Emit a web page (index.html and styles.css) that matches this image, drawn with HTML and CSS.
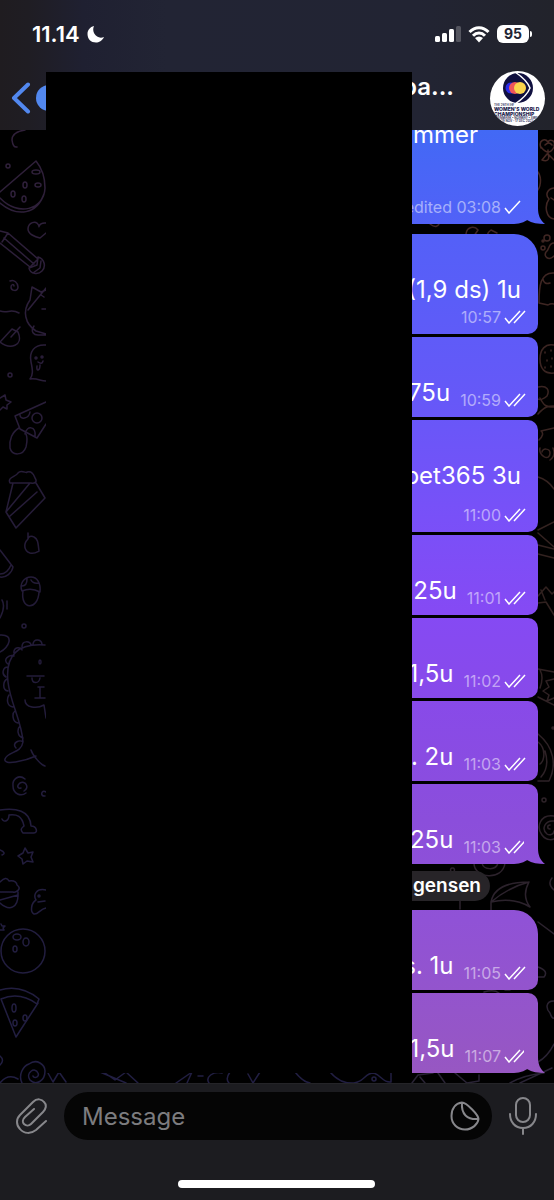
FILE: index.html
```html
<!DOCTYPE html>
<html lang="en">
<head>
    <meta charset="UTF-8">
    <meta name="viewport" content="width=device-width, initial-scale=1.0">
    <title>Chat</title>
    <link rel="stylesheet" href="styles.css">
</head>
<body>
    <!-- shared icons -->
    <svg class="symbols" aria-hidden="true">
        <symbol id="check" viewBox="0 0 22 14">
            <path d="M1 8l4 5L16 1"/>
        </symbol>
        <symbol id="double-check" viewBox="0 0 22 14">
            <path d="M1 8l4 5L16 1M10 13L21 1"/>
        </symbol>
    </svg>

    <header class="header">
        <div class="status-bar">
            <div class="status-left">
                <span class="clock">11.14</span>
                <svg class="moon" viewBox="0 0 18 18"><path d="M7 1C4 7 10 15 17 12C15 16 12 17.500 9 17.500C4 17.500 .5 14 .5 9C.5 5 3 2 7 1z"/></svg>
            </div>
            <div class="status-right">
                <svg class="signal" viewBox="0 0 26 16">
                    <rect x="0" y="10" width="5" height="6" rx="1.500"/>
                    <rect x="7" y="7" width="5" height="9" rx="1.500"/>
                    <rect x="14" y="3" width="5" height="13" rx="1.500"/>
                    <rect class="signal-off" x="21" y="0" width="5" height="16" rx="1.500"/>
                </svg>
                <svg class="wifi" viewBox="0 0 22 17">
                    <path class="wave" d="M1.500 6C7 .3 15 .3 20.500 6M5 9.700C8.500 6 13.500 6 17 9.700"/>
                    <path d="M7 12C9.500 10 12.500 10 15 12L11 16.500z"/>
                </svg>
                <span class="battery">95</span>
            </div>
        </div>
        <nav class="nav-bar">
            <button class="back" type="button" aria-label="Back">
                <svg class="chevron" viewBox="0 0 20 32"><path d="M17 2.500L3 16l14 13.500"/></svg>
                <span class="badge"></span>
            </button>
            <h1 class="title">pa...</h1>
            <a class="avatar" href="#" aria-label="Group info">
                <svg viewBox="0 0 55 55">
                    <circle cx="28" cy="17" r="15" fill="#10103f"/>
                    <circle cx="21" cy="17" r="5.500" fill="#2b2be8"/>
                    <circle cx="25" cy="17" r="6" fill="#f0565a"/>
                    <circle cx="30" cy="17" r="6" fill="#fbd44c"/>
                    <path d="M25 1q12 8 15 16-3 8-15 16" fill="none" stroke="#fff" stroke-width="1.500"/>
                    <text class="logo-small" x="4" y="35">THE 26TH IHF</text>
                    <text class="logo-text" x="4" y="40">WOMEN'S WORLD</text>
                    <text class="logo-text" x="4" y="45">CHAMPIONSHIP</text>
                    <text class="logo-small" x="6" y="48">DENMARK • NORWAY • SWEDEN</text>
                    <text class="logo-small" x="11" y="51">29 NOV - 17 DEC 2023</text>
                </svg>
            </a>
        </nav>
    </header>

    <main class="chat">
        <svg class="wallpaper" viewBox="0 130 554 953" preserveAspectRatio="xMidYMin slice" aria-hidden="true">
            <defs>
                <linearGradient id="left-tint" gradientUnits="userSpaceOnUse" x1="0" y1="130" x2="0" y2="1083">
                    <stop offset="0" stop-color="#30203a"/>
                    <stop offset="0.500" stop-color="#231b38"/>
                    <stop offset="1" stop-color="#211e42"/>
                </linearGradient>
                <linearGradient id="right-tint" gradientUnits="userSpaceOnUse" x1="0" y1="130" x2="0" y2="1083">
                    <stop offset="0" stop-color="#452824"/>
                    <stop offset="0.500" stop-color="#30211f"/>
                    <stop offset="1" stop-color="#292335"/>
                </linearGradient>
            </defs>
            <g stroke="url(#left-tint)">
                <path d="M25 130q-13 2-13 10 1 8 5 7"/>
                <circle cx="8" cy="166" r="2"/>
                <!-- watermelon -->
                <path d="M0 192L36 161q9 11 9 27c-1 22-27 29-45 10M0 203c18 15 37 11 44-9"/>
                <ellipse cx="36" cy="172" rx="4" ry="2"/>
                <ellipse cx="25" cy="185" rx="2" ry="3"/>
                <ellipse cx="38" cy="185" rx="3" ry="2"/>
                <ellipse cx="13" cy="194" rx="2" ry="3"/>
                <ellipse cx="24" cy="199" rx="2" ry="3"/>
                <path d="M46 223c-8-1-7 6-7 3-3-7-11-3-11 3 0 5 7 8 12 9l6-5"/>
                <!-- pencil -->
                <path d="M0 231l8 2 30 26-8 8L0 243M8 233l-6 9M4 238l30 26M38 257c7 2 8 10 4 14-4 4-12 3-13-3M38 257l-1 8-8 3M41 261l-1 7-7 5"/>
                <path d="M10 281c4-2 8 2 8 6 0 5-7 4-7 0 0-3 3-3 3-1M0 311c8 3 10-3 19 2"/>
                <!-- kitten -->
                <path d="M46 290l-5 2-9-5-2 13c-8 11-5 24 6 31l10 3M46 288L28 310M34 326c-4 6 0 9 4 9h8M41 295l3 2M42 309h4"/>
                <path d="M0 342l12-13 6 3c6 14-8 18-18 10M20 327l-9 10"/>
                <!-- ghost -->
                <path d="M46 345c-12-1-17 7-15 17 2 9 2 13-1 17 8-1 10 2 16 2M37 366c-1 6 3 5 3-1"/>
                <circle cx="36" cy="358" r="1"/><circle cx="42" cy="357" r="1"/>
                <path d="M38 362q4 3 5-1"/>
                <circle cx="10" cy="375" r="2"/>
                <path d="M0 398l5-3 1 5 5 2-4 3v4l-4-2-3 3"/>
                <!-- cheese -->
                <path d="M46 402L15 416l5 13 17 9 9-14M20 415c0 5 9 4 10-3M25 434c2-9 11-8 10 2"/>
                <circle cx="37" cy="418" r="5"/>
                <path d="M19 428c-7 4-10 12-9 20 2 8 13 8 16-1 1-5 2-8 0-13"/>
                <!-- cake -->
                <path d="M10 483c-3-6 6-6 8-10 3-4 9 1 9-1 6-2 7 4 8 6 3 4-1 6-4 5zM13 483L6 512l10 16 29-30-9-15M6 512l24-29M10 516l27-24"/>
                <path d="M28 533v6c-5 5-4 12 2 14 5 1 7-1 9-2-1-8-1-12-5-14-3-2-6 0-6 2"/>
                <path d="M0 550l13 17c-1 6-7 11-13 10M0 574c5 0 9-4 11-9"/>
                <!-- acorn -->
                <path d="M22 591c-3-7 2-14 9-14 6 0 10 6 9 15q-9-5-18-1M23 591c-3 19 15 20 16 1M22 586q5 0 5-7M31 580q2 4 8 3"/>
                <path d="M2 600c3 5 2 10-2 18M7 601v8"/>
                <circle cx="24" cy="626" r="2"/>
                <path d="M0 635c15-1 9 13 0 17"/>
                <!-- dinosaur -->
                <path d="M45 645c-27-2-40 10-37 37 2 20 14 40 15 60-2 12-15 9-18 17-2 7 20 2 31-3M31 750c2 6 10 15 14 16M33 644c1-6 9-5 9 1M22 647c0-7 8-6 9-2M14 653c-1-7 8-6 8-3M8 664c-6-4 1-10 6-8M6 677c-5-3-3-10 2-10M8 691c-6-1-5-10-1-12M13 707c-7-1-6-9-4-12M18 723c-6-1-6-10-3-12M23 738c-6-2-6-9-3-12M16 748c-5-5 4-9 7-6M27 676h17M32 678c0 6 7 6 8 0M38 687h6M40 687v11M35 698h10M25 700c0 8 12 9 19 5l2 13"/>
                <ellipse cx="40" cy="662" rx="1" ry="2"/>
                <path d="M25 779c-6-5-13 0-12 7 0 8 8 11 13 7M24 791c6-4 1-11-4-8-4 3-2 6 1 5M46 792c-5-3-6 5-1 4"/>
                <!-- rainbow -->
                <path d="M0 810c16-2 30 0 31 16 6 0 7 7 3 7H23c-4-4 0-6 1-7-2-10-7-12-15-11 0 6-5 8-7 4"/>
                <path d="M25 848l3 5 5-1-2 5 2 5-6-1-4 3-1-5-4-3 5-3zM0 850q7 3 2 5"/>
                <!-- cupcake -->
                <path d="M0 882c4-4 7-5 9-1 6-1 8 2 8 4 6 4-2 8-4 7H0M0 903c10 9 18 4 18-8L0 900M18 892v5"/>
                <path d="M46 890c-10-2-13 5-10 10-5 3-6 12-2 14 4 1 6-5 12-6M38 902l7-1"/>
                <circle cx="39" cy="896" r="1"/>
                <!-- bowling ball -->
                <circle cx="23" cy="951" r="22"/>
                <ellipse cx="17" cy="937" rx="4" ry="3"/>
                <ellipse cx="26" cy="942" rx="3" ry="4"/>
                <ellipse cx="15" cy="949" rx="2" ry="3"/>
                <path d="M1 924l1 2h3l-2 2 1 2H0"/>
                <!-- pizza -->
                <path d="M0 990c14-4 28 0 39 9l-2 5c-11-8-24-10-36-5M1 999l15 38 22-34"/>
                <ellipse cx="14" cy="1008" rx="2" ry="4"/>
                <ellipse cx="25" cy="1018" rx="2" ry="3"/>
                <ellipse cx="15" cy="1023" rx="2" ry="3"/>
                <!-- bottom row -->
                <path d="M0 1056q5 4 0 9M22 1083c-4-8 1-17 7-19 8-6 16 1 16 7 0 10-9 15-15 9-5-7 5-14 8-7 2 4-4 6-5 3M0 1083q8-10 18-4M48 1073l5 9 6-10 7 10M100 1072l26 11M105 1073l10 7 11-8 12 11M176 1083l16-11-5 11M198 1076h5M209 1083c-4-6 4-12 13-10M230 1072q-5 7-1 11M248 1074l5 9 7-11"/>
                <path d="M295 1072q8 10 15 11M330 1072q10 12 24 11M354 1083c12-2 10-10 20-10 8 3 9 10 17 9v-9"/>
                <circle cx="374" cy="1079" r="2"/>
            </g>
            <g stroke="url(#right-tint)">
                <!-- rose -->
                <path d="M541 148c-3-8 4-10 7-6 2-4 8-1 6 4M541 147q8 10 13 0M545 145q4-4 7 0M547 154l-5 6c6 2 8-1 6-6zM548 154l6 6M548 150v4"/>
                <path d="M538 172c4 6 3 16-2 20"/>
                <path d="M554 188c-7 1-9 7-5 11-5 7-3 19 5 20M551 198l3 2"/>
                <path d="M466 234c1-8 9-8 12-4l-6 9M489 240q-4-6 2-10l6 3M430 224q8 6 10-3"/>
                <!-- paw -->
                <circle cx="543" cy="248" r="2"/><circle cx="547" cy="238" r="3"/><circle cx="543" cy="241" r="1"/>
                <path d="M554 243c-6 0-4 6-8 9-3 5 3 9 8 4"/>
                <path d="M554 273c-14-1-15 14-15 30l9 2q3-2 6-1M543 279q1 6 7 4"/>
                <!-- strawberry -->
                <path d="M554 345c-9-2-14 5-14 14 0 10 5 15 14 14"/>
                <path d="M545 352v1M551 350v1M547 360v1M552 358v1M545 367v1M551 366v1"/>
                <path d="M538 387c9-2 12 3 9 9q-6 5-9 3M540 398c4 8 6 9 14 9M538 414c7-8 11-8 16-8M539 440q6-6 2-9l13-3M540 448c-2 8 10 14 10 5 0-5-8-5-8-1M553 448q3 8-3 12M538 477q10 3 16 12M538 530l16-8M538 545l16 4M538 533l16 14M538 554l16 4"/>
                <path d="M538 596l8-9 6 7 2-2M538 603l8-1 8 13M541 590l4 10"/>
                <path d="M538 669l16 3M538 697l16 8M540 688q4-11 0-18M554 679l-8 2 3 6-6 4 6 4-2 6 7-3"/>
                <circle cx="553" cy="728" r="1"/>
                <path d="M538 734c16 13 19 31 11 47h-11M538 742c8 6 7 18 2 22M541 777q9-10 4-26"/>
                <circle cx="544" cy="800" r="2"/>
                <path d="M554 816c-14-2-18 11-12 19 5 7 12 4 12 4M554 821c-9-1-13 8-7 13 3 2 7 0 7-3M550 829c-3 0-3-4 0-4"/>
                <path d="M474 863c0 16 29 18 31 0M482 863c1 7 14 8 16 0M452 868a2 2 0 1 0 1 0"/>
                <!-- umbrella -->
                <path d="M491 902c3-16 20-20 38-20-5 9-5 17 1 25-13-8-26-8-39-5zM491 902q18-15 38-20M491 902v8M538 922l16 12M460 895v14"/>
                <path d="M538 967q11 4 6 10h-6M552 878q-5 6 2 12M554 1001c-9 0-8 8-4 12q2 6 4 5M484 992q10-3 15 1M505 990h5M538 1062q10-6 16-18M510 1083q14-8 34-10M520 1083l32-15"/>
                <path d="M412 1083l6-8 15-2M425 1083l-5-6M438 1073l7 10M455 1073l12 10 12-2v-6"/>
            </g>
        </svg>

        <div class="message message-long tail">
            <p class="message-text wide-space">mmer</p>
            <div class="meta"><span>edited 03:08</span><svg><use href="#check"/></svg></div>
        </div>
        <div class="message message-medium group-start">
            <p class="message-text">(1,9 ds) 1u</p>
            <div class="meta"><span>10:57</span><svg><use href="#double-check"/></svg></div>
        </div>
        <div class="message message-inline">
            <p class="message-text">75u</p>
            <div class="meta"><span>10:59</span><svg><use href="#double-check"/></svg></div>
        </div>
        <div class="message message-large">
            <p class="message-text line-space">bet365 3u</p>
            <div class="meta"><span>11:00</span><svg><use href="#double-check"/></svg></div>
        </div>
        <div class="message message-inline">
            <p class="message-text">25u</p>
            <div class="meta"><span>11:01</span><svg><use href="#double-check"/></svg></div>
        </div>
        <div class="message message-inline">
            <p class="message-text">1,5u</p>
            <div class="meta"><span>11:02</span><svg><use href="#double-check"/></svg></div>
        </div>
        <div class="message message-inline">
            <p class="message-text">. 2u</p>
            <div class="meta"><span>11:03</span><svg><use href="#double-check"/></svg></div>
        </div>
        <div class="message message-inline tail">
            <p class="message-text">25u</p>
            <div class="meta"><span>11:03</span><svg><use href="#double-check"/></svg></div>
        </div>
        <div class="notice">gensen</div>
        <div class="message message-inline group-start">
            <p class="message-text">s. 1u</p>
            <div class="meta"><span>11:05</span><svg><use href="#double-check"/></svg></div>
        </div>
        <div class="message message-inline tail">
            <p class="message-text">1,5u</p>
            <div class="meta"><span>11:07</span><svg><use href="#double-check"/></svg></div>
        </div>
    </main>

    <footer class="footer">
        <form class="composer">
            <button type="button" aria-label="Attach file">
                <svg class="clip" viewBox="0 0 31 36"><path d="M30 23L20 32C15 36 8 36 4 31C0 27 0 21 4 17L17 4C21 0 26 1 28 4C31 7 30 11 27 14L15 26C13 28 10 28 8 26C6 24 7 21 9 19L18 11"/></svg>
            </button>
            <div class="field">
                <input type="text" id="message" name="message" placeholder="Message" aria-label="Message">
                <button type="button" aria-label="Stickers">
                    <svg class="sticker" viewBox="0 0 30 30"><path d="M12 1.500C5 2.500 1.500 8 1.500 15c0 8 6 13.500 13.500 13.500S28 23 28.500 18c0-4-12-16.500-16.500-16.500zM12 1.500C11 13 17 19 28.500 18"/></svg>
                </button>
            </div>
            <button type="button" aria-label="Record voice message">
                <svg class="mic" viewBox="0 0 28 38"><rect x="7" y="1" width="14" height="24" rx="7"/><path d="M1 17c0 8 5 14 13 14s13-6 13-14M14 31v6"/></svg>
            </button>
        </form>
        <div class="home-indicator"></div>
    </footer>

    <div class="cover"></div>
</body>
</html>
```
FILE: styles.css
```css
* {
    box-sizing: border-box;
}

body {
    font-family: Inter, "Liberation Sans", sans-serif;
    background-color: #000;
    color: #fff;
    margin: 0;
    height: 100vh;
    display: flex;
    flex-direction: column;
    position: relative;
    overflow: hidden;
}

button {
    background: none;
    border: none;
    padding: 0;
    display: flex;
    align-items: center;
    cursor: pointer;
}

svg {
    display: block;
}

.symbols {
    display: none;
}

/* Header */

.header {
    background: linear-gradient(to right, #1f1c20 0, #1f1d23 5%, #1f2031 15%, #222434 30%, #222433 75%, #22232b 100%);
    flex-shrink: 0;
}

.status-bar {
    display: flex;
    justify-content: space-between;
    align-items: center;
    height: 68px;
    padding: 0 22px 0 32px;
}

.status-left,
.status-right {
    display: flex;
    align-items: center;
    gap: 7px;
}

.clock {
    font-size: 22px;
    font-weight: 600;
}

.moon {
    width: 18px;
    height: 18px;
    fill: #fff;
}

.signal {
    width: 26px;
    height: 16px;
    fill: #fff;
}

.signal-off {
    fill: #54555f;
}

.wifi {
    width: 22px;
    height: 17px;
    fill: #fff;
}

.wave {
    fill: none;
    stroke: #fff;
    stroke-width: 3;
}

.battery {
    width: 32px;
    height: 18px;
    margin-right: 3px;
    border-radius: 6px;
    background-color: #fff;
    color: #222433;
    font-size: 14px;
    font-weight: 700;
    line-height: 18px;
    text-align: center;
    position: relative;
}

.battery::after {
    content: "";
    position: absolute;
    left: 33px;
    top: 6px;
    width: 2px;
    height: 6px;
    border-radius: 0 2px 2px 0;
    background-color: #fff;
}

.nav-bar {
    display: flex;
    align-items: center;
    height: 62px;
    padding: 0 9px 2px 11px;
}

.back {
    gap: 5px;
}

.chevron {
    width: 20px;
    height: 32px;
    fill: none;
    stroke: #5288ef;
    stroke-width: 4;
    stroke-linecap: round;
    stroke-linejoin: round;
}

.badge {
    width: 30px;
    height: 26px;
    border-radius: 13px;
    background-color: #5288ef;
}

.title {
    flex: 1;
    margin: 0 36px 22px 0;
    font-size: 24px;
    font-weight: 600;
    line-height: 28px;
    text-align: right;
}

.avatar {
    width: 55px;
    height: 55px;
    border-radius: 50%;
    background-color: #fff;
    overflow: hidden;
}

.logo-text {
    font-size: 5px;
    font-weight: 800;
    fill: #16164a;
}

.logo-small {
    font-size: 3px;
    font-weight: 600;
    fill: #16164a;
}

/* Messages */

.chat {
    flex: 1;
    min-height: 0;
    display: flex;
    flex-direction: column;
    justify-content: flex-end;
    align-items: flex-end;
    gap: 3px;
    padding: 0 16px 10px;
    overflow: hidden;
    position: relative;
}

.wallpaper {
    position: absolute;
    top: 0;
    left: 0;
    width: 100%;
    height: 100%;
    fill: none;
    stroke-width: 1.5;
    stroke-linecap: round;
    stroke-linejoin: round;
}

.message,
.tail::after {
    background: linear-gradient(#4269f5 130px, #5460f8 240px, #6658f8 400px, #7950f8 520px, #854af4 610px, #884ae9 700px, #8b4edb 820px, #9052d6 920px, #9757c2 1073px) fixed;
}

.message {
    position: relative;
    flex-shrink: 0;
    width: 60%;
    min-height: 80px;
    padding: 0 12px 7px;
    border-radius: 10px;
    display: flex;
    flex-direction: column;
    justify-content: flex-end;
    align-items: flex-end;
}

.message-inline {
    flex-direction: row;
    gap: 5px;
}

.message-medium {
    min-height: 100px;
}

.message-large {
    min-height: 112px;
}

.message-long {
    min-height: 140px;
    margin-bottom: 7px;
}

.group-start {
    border-top-right-radius: 24px;
}

.tail {
    border-bottom-right-radius: 24px;
}

.tail::after {
    content: "";
    position: absolute;
    right: -7px;
    bottom: 0;
    width: 21px;
    height: 24px;
    clip-path: path("M0 0H14V8C14 15 16 20 21 24C14 24 8 23 3 20L0 18Z");
}

.message-text {
    margin: 0 0 3px;
    padding-right: 5px;
    font-size: 24px;
    line-height: 28px;
    white-space: nowrap;
}

.line-space {
    margin-bottom: 15px;
}

.wide-space {
    margin-bottom: 48px;
    padding-right: 48px;
}

.meta {
    display: flex;
    align-items: center;
    gap: 3px;
    font-size: 16px;
    line-height: 20px;
    color: rgba(255, 255, 255, 0.5);
}

.meta svg {
    width: 22px;
    height: 14px;
    fill: none;
    stroke: #fff;
    stroke-width: 1.5;
}

.notice {
    position: relative;
    margin: 4px 48px 6px 0;
    padding: 0 9px 0 60px;
    border-radius: 15px;
    background-color: #272428;
    font-size: 19px;
    font-weight: 600;
    line-height: 30px;
}

/* Composer */

.footer {
    flex-shrink: 0;
    background-color: #1c1c20;
    border-top: 1px solid #242428;
    padding: 8px 17px 12px 16px;
}

.composer {
    display: flex;
    align-items: center;
    gap: 17px;
}

.composer svg {
    fill: none;
    stroke: #87878b;
    stroke-width: 2;
    stroke-linecap: round;
}

.clip {
    width: 31px;
    height: 36px;
}

.field {
    flex: 1;
    min-width: 0;
    display: flex;
    align-items: center;
    height: 48px;
    padding: 0 12px 0 18px;
    border-radius: 24px;
    background-color: #050505;
}

.field input {
    flex: 1;
    min-width: 0;
    padding: 0;
    border: none;
    outline: none;
    background: none;
    color: #fff;
    font-family: inherit;
    font-size: 24px;
}

.field input::placeholder {
    color: #7c7c7f;
}

.sticker {
    width: 30px;
    height: 30px;
}

.mic {
    width: 28px;
    height: 38px;
}

.home-indicator {
    width: 38%;
    height: 8px;
    margin: 40px auto 0;
    border-radius: 4px;
    background-color: #fff;
}

/* Black block that hides the conversation */

.cover {
    position: absolute;
    top: 72px;
    bottom: 127px;
    left: 46px;
    right: 142px;
    background-color: #000;
}
```
